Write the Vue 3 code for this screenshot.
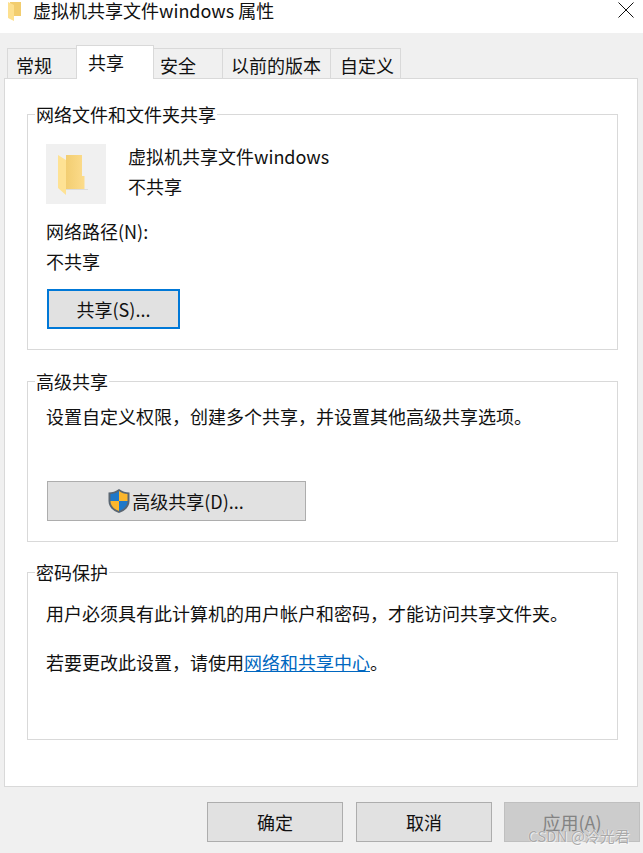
<template>
  <div class="dialog">
    <!-- Title bar -->
    <div class="titlebar">
      <svg class="title-folder" width="15" height="20" viewBox="0 0 15 20">
        <path d="M3 1H14V15H3Z" fill="#f2cd6f" />
        <path d="M1 1L7 4V20L1 17Z" fill="#fde08f" />
      </svg>
      <span class="title-text">虚拟机共享文件windows 属性</span>
      <svg class="close" width="16" height="16" viewBox="0 0 16 16">
        <path d="M.5.5L15.5 15.5M15.5.5L.5 15.5" stroke="#111" stroke-width="1" fill="none" />
      </svg>
    </div>

    <!-- Tabs -->
    <div class="tabs">
      <div
        v-for="tab in tabs"
        :key="tab.label"
        class="tab"
        :class="{ active: tab.active }"
        :style="{ width: tab.width + 'px', paddingLeft: tab.pad + 'px' }"
      >{{ tab.label }}</div>
    </div>

    <!-- Panel -->
    <div class="panel">
      <fieldset class="group group-net">
        <legend>网络文件和文件夹共享</legend>
        <div class="file-row">
          <div class="file-icon">
            <svg width="30" height="41" viewBox="0 0 30 41">
              <defs>
                <linearGradient id="back" x1="0" x2="1" y1="0" y2="0">
                  <stop offset="0" stop-color="#eec766" />
                  <stop offset="1" stop-color="#fcdc8c" />
                </linearGradient>
              </defs>
              <path d="M8 34H30V35H8Z" fill="#dcdcdc" />
              <path d="M0 0H24V21H26.500V34H8V0Z" fill="url(#back)" />
              <path d="M0 0L8 5V40L0 33Z" fill="#fee294" />
            </svg>
          </div>
          <div class="file-meta">
            <div>虚拟机共享文件windows</div>
            <div>不共享</div>
          </div>
        </div>
        <div class="path-label">网络路径(N):</div>
        <div class="path-value">不共享</div>
        <button class="btn btn-focus">共享(S)...</button>
      </fieldset>

      <fieldset class="group group-adv">
        <legend>高级共享</legend>
        <p class="desc">设置自定义权限，创建多个共享，并设置其他高级共享选项。</p>
        <button class="btn btn-wide">
          <svg class="shield" width="24" height="26" viewBox="0 0 24 26">
            <path d="M12 1C9 3.500 5 4.500 1.500 4.500V13C1.500 19 6 23 12 25C18 23 22.500 19 22.500 13V4.500C19 4.500 15 3.500 12 1Z" fill="#5a6672" />
            <path d="M12 3V13H3.500V6C6.500 5.800 9.500 5 12 3Z" fill="#1f78c8" />
            <path d="M12 3C14.500 5 17.500 5.800 20.500 6V13H12Z" fill="#fbb62c" />
            <path d="M3.500 13H12V23C7.500 21.500 3.500 18 3.500 13Z" fill="#fbb62c" />
            <path d="M12 13H20.500C20.500 18 16.500 21.500 12 23Z" fill="#1f78c8" />
          </svg>
          <span>高级共享(D)...</span>
        </button>
      </fieldset>

      <fieldset class="group group-pwd">
        <legend>密码保护</legend>
        <p class="desc">用户必须具有此计算机的用户帐户和密码，才能访问共享文件夹。</p>
        <p class="desc desc-link">若要更改此设置，请使用<a class="link">网络和共享中心</a>。</p>
      </fieldset>
    </div>

    <!-- Footer buttons -->
    <div class="footer">
      <button class="btn btn-foot">确定</button>
      <button class="btn btn-foot">取消</button>
      <button class="btn btn-foot disabled">应用(A)</button>
    </div>

    <div class="watermark">CSDN @泠光君</div>
  </div>
</template>

<script setup>
const tabs = [
  { label: '常规', width: 69, pad: 8 },
  { label: '共享', width: 78, pad: 11 },
  { label: '安全', width: 69, pad: 6 },
  { label: '以前的版本', width: 108, pad: 8 },
  { label: '自定义', width: 71, pad: 9 }
];
tabs[1].active = true;
</script>

<style>
html, body {
  margin: 0;
  background: #f0f0f0;
}
</style>

<style scoped>
.dialog {
  position: relative;
  width: 643px;
  height: 853px;
  overflow: hidden;
  background: #f0f0f0;
  color: #111;
  font-family: "Noto Sans CJK SC", "Noto Sans", sans-serif;
  font-size: 18px;
  line-height: 24px;
}

.titlebar {
  height: 33px;
  background: #fff;
  display: flex;
  align-items: flex-start;
  padding: 0 9px 0 7px;
  box-sizing: border-box;
}

.title-folder {
  margin-top: 1px;
}

.title-text {
  margin-left: 11px;
  line-height: 20px;
  flex: 1;
}

.close {
  margin-top: 2px;
}

.tabs {
  display: flex;
  align-items: flex-end;
  height: 45px;
  padding-left: 7px;
}

.tab {
  height: 30px;
  box-sizing: border-box;
  border: 1px solid #d9d9d9;
  border-bottom: none;
  border-right: none;
  line-height: 33px;
  white-space: nowrap;
}

.tab:last-child {
  border-right: 1px solid #d9d9d9;
}

.tab.active {
  background: #fff;
  border-right: 1px solid #d9d9d9;
  margin-right: -1px;
  position: relative;
  z-index: 1;
  margin-bottom: -1px;
  height: 34px;
  line-height: 32px;
}

.panel {
  margin-left: 4px;
  width: 634px;
  height: 709px;
  box-sizing: border-box;
  background: #fff;
  border: 1px solid #d9d9d9;
  padding: 23px 0 0 22px;
  display: flex;
  flex-direction: column;
}

.group {
  width: 591px;
  box-sizing: border-box;
  margin: 0;
  padding: 0 0 0 18px;
  border: 1px solid #d9d9d9;
  min-width: 0;
}

.group legend {
  padding: 0 1px;
  margin-left: -11px;
  line-height: 24px;
}

.group-net {
  height: 248px;
  margin-bottom: 19px;
}

.group-adv {
  height: 173px;
  margin-bottom: 18px;
}

.group-pwd {
  height: 180px;
}

.file-row {
  display: flex;
  margin-top: 18px;
}

.file-icon {
  width: 60px;
  height: 60px;
  background: #f0f0f0;
  display: flex;
  align-items: center;
  justify-content: center;
}

.file-icon svg {
  margin: 2px 0 0 -6px;
}

.file-meta {
  margin-left: 22px;
  margin-top: 0;
  display: flex;
  flex-direction: column;
  gap: 6px;
}

.path-label {
  margin-top: 15px;
}

.path-value {
  margin-top: 6px;
}

.btn {
  display: flex;
  align-items: center;
  justify-content: center;
  box-sizing: border-box;
  height: 40px;
  padding: 0;
  background: #e1e1e1;
  border: 1.500px solid #adadad;
  font: inherit;
  color: #111;
}

.btn-focus {
  width: 133px;
  margin-top: 16px;
  margin-left: 1px;
  border: 2px solid #0078d7;
}

.btn-wide {
  width: 259px;
  margin-top: 53px;
  margin-left: 1px;
}

.shield {
  margin-left: -2px;
  margin-right: 1px;
  margin-top: -1px;
}

.desc {
  margin: 11px 0 0;
}

.group-pwd .desc {
  margin-top: 17px;
}

.group-pwd .desc-link {
  margin-top: 25px;
}

.link {
  color: #0067c0;
  text-decoration: underline;
}

.footer {
  display: flex;
  padding: 15px 0 0 207px;
  gap: 13px;
}

.btn-foot {
  width: 136px;
}

.btn-foot + .btn-foot + .btn-foot {
  margin-left: -1px;
}

.btn-foot.disabled {
  background: #ccc;
  border-color: #bfbfbf;
  color: #838383;
}

.watermark {
  position: absolute;
  left: 528px;
  top: 825px;
  font-size: 15px;
  line-height: 22px;
  color: #a9a9a9;
  text-shadow: 0 0 1px #fff, 1px 1px 0 rgba(255, 255, 255, .6);
  white-space: nowrap;
}
</style>
